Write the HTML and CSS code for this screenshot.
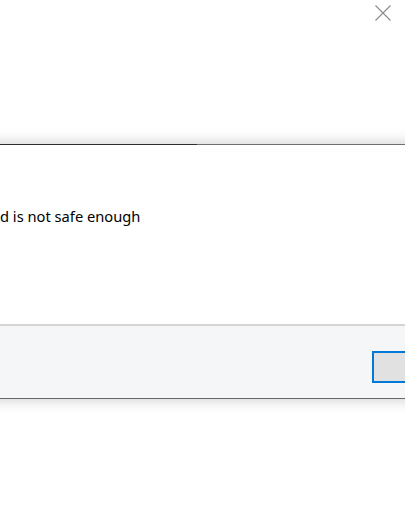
FILE: index.html
```html
<!DOCTYPE html>
<html>
<head>
<meta charset="utf-8">
<link rel="stylesheet" href="styles.css">
</head>
<body>
<div class="topbar">
  <button class="close" aria-label="Close">
    <svg width="16" height="16" viewBox="0 0 16 16"><path d="M0.5 0.5 L15.5 15.5 M15.5 0.5 L0.5 15.5" stroke="#8a8a8a" stroke-width="1.1" fill="none"/></svg>
  </button>
</div>
<div class="dialog">
  <div class="accent"><span class="accent-done"></span></div>
  <div class="content">
    <p class="message">d is not safe enough</p>
  </div>
  <div class="separator"></div>
  <div class="footer">
    <button class="ok"></button>
  </div>
</div>
</body>
</html>
```
FILE: styles.css
```css
html, body {
  margin: 0;
  padding: 0;
  background: #ffffff;
  overflow: hidden;
}
body {
  width: 405px;
  height: 525px;
  font-family: "Segoe UI", "Noto Sans", "Open Sans", sans-serif;
}
.topbar {
  height: 144px;
  display: flex;
  justify-content: flex-end;
  align-items: flex-start;
  padding: 5px 14px 0 0;
  box-sizing: border-box;
}
.close {
  border: 0;
  background: transparent;
  padding: 0;
  width: 16px;
  height: 16px;
  display: block;
}
.close svg { display: block; }
.dialog {
  margin: 0 -20px;
  background: #ffffff;
  box-shadow: 0 0 14px rgba(0, 0, 0, 0.22);
  border-bottom: 1px solid #686868;
}
.accent {
  height: 1px;
  background: #6e6e6e;
  display: flex;
}
.accent-done {
  width: 217px;
  background: #2e2e2e;
}
.content {
  height: 179px;
  padding: 61px 0 0 20px;
  box-sizing: border-box;
}
.message {
  margin: 0;
  font-size: 14.7px;
  line-height: 20px;
  color: #000;
}
.separator {
  height: 2px;
  background: #d4d4d4;
}
.footer {
  height: 72px;
  background: #f5f6f8;
  display: flex;
  justify-content: flex-end;
  align-items: flex-start;
  padding-top: 25px;
  box-sizing: border-box;
}
.ok {
  width: 53px;
  height: 32px;
  box-sizing: border-box;
  border: 2px solid #0078d7;
  background: #e1e1e1;
  padding: 0;
}
```
